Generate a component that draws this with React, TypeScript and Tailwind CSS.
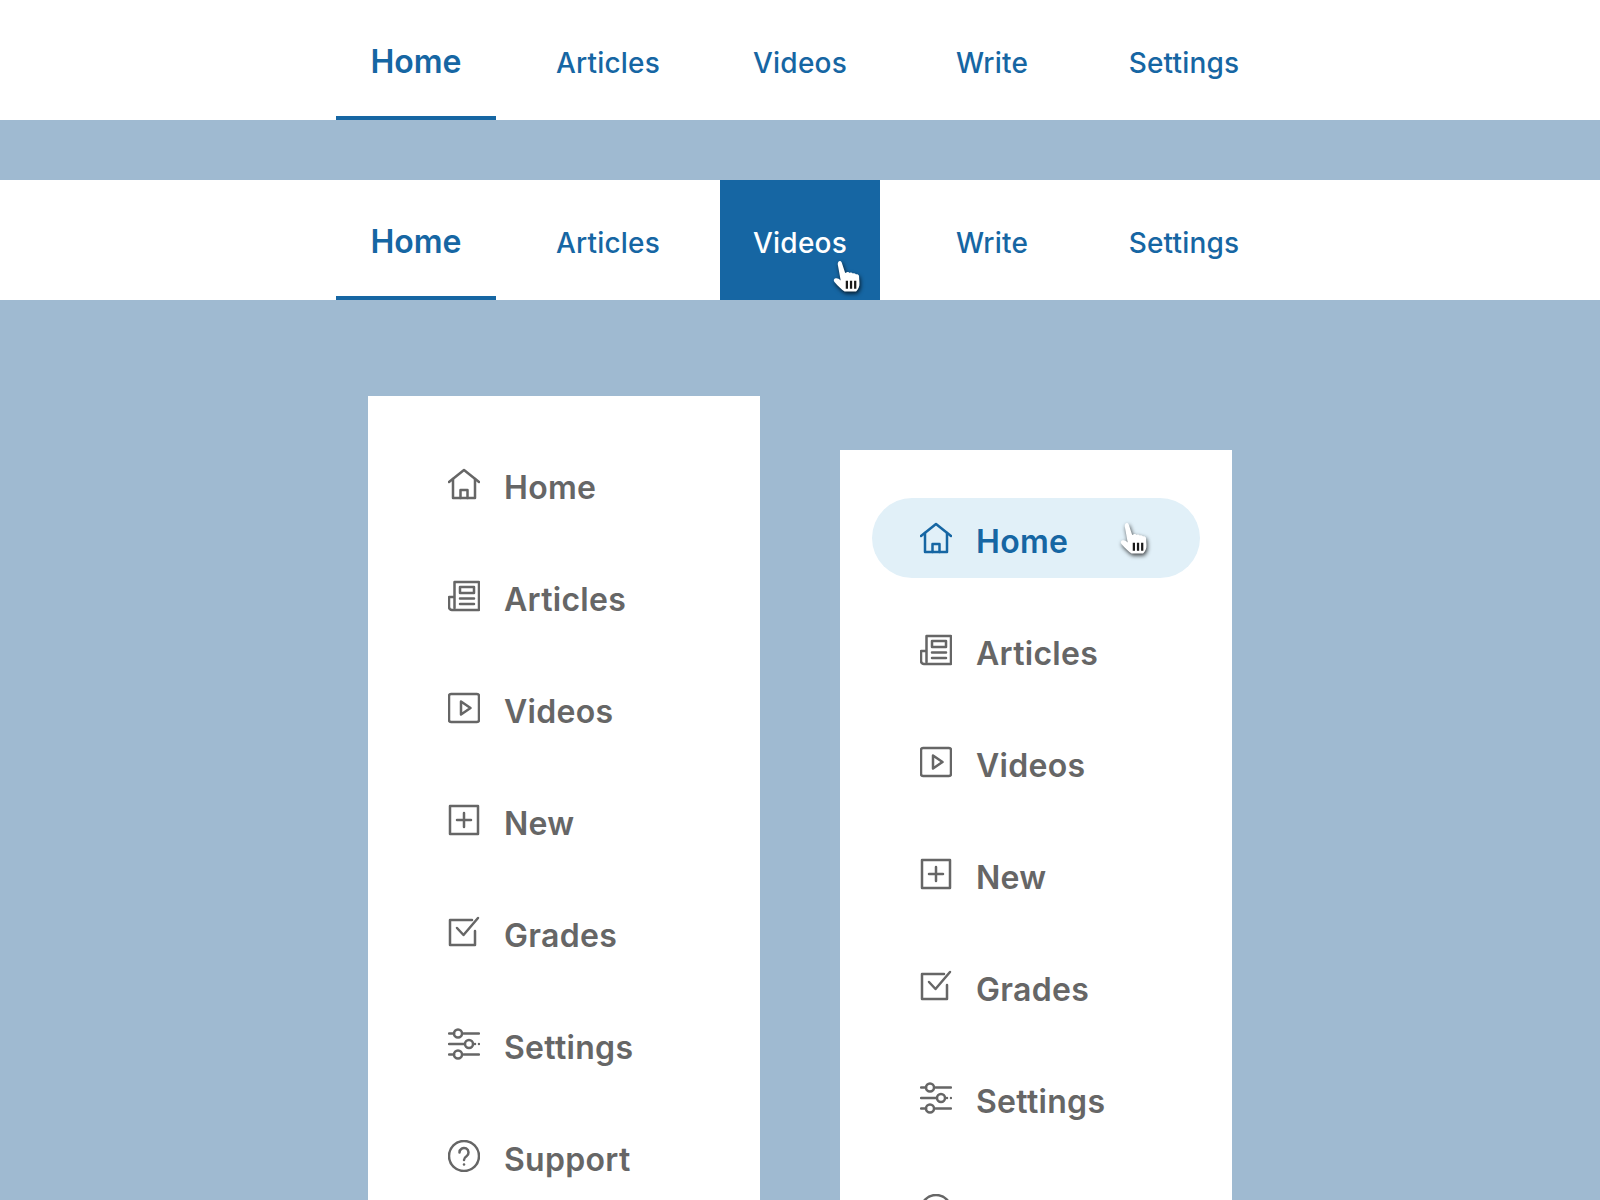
import React from "react";

const tabs = ["Home", "Articles", "Videos", "Write", "Settings"];

type IconProps = { className?: string };

const Svg: React.FC<React.PropsWithChildren<IconProps>> = ({ className, children }) => (
  <svg
    viewBox="0 0 32 32"
    fill="none"
    stroke="currentColor"
    strokeWidth="2.500"
    strokeLinecap="round"
    strokeLinejoin="round"
    className={`w-8 h-8 shrink-0 ${className ?? ""}`}
  >
    {children}
  </svg>
);

const HomeIcon = () => (
  <Svg>
    <path d="M1 14 16 2l15 12" />
    <path d="M5 11v19h22V11" />
    <path d="M12.500 30v-8h7v8" />
  </Svg>
);

const ArticlesIcon = () => (
  <Svg>
    <path d="M6.500 28V2H31v28H4a3 3 0 0 1-3-3V17h5.500" />
    <rect x="12" y="7" width="14" height="6" />
    <path d="M12 18.500h14M12 24h14" />
  </Svg>
);

const VideosIcon = () => (
  <Svg>
    <rect x="1" y="2" width="30" height="28" rx="2" />
    <path d="M13 9.500 22.500 16 13 22.500z" />
  </Svg>
);

const NewIcon = () => (
  <Svg>
    <rect x="2" y="2" width="28" height="28" />
    <path d="M16 9v14M9 16h14" />
  </Svg>
);

const GradesIcon = () => (
  <Svg>
    <path d="M24 4H2v25h25V15" />
    <path d="M9 12l6.500 7L30 2" />
  </Svg>
);

const SettingsIcon = () => (
  <Svg>
    <circle cx="10" cy="5.500" r="4" />
    <circle cx="21" cy="16" r="4" />
    <circle cx="10" cy="26.500" r="4" />
    <path d="M1 5.500h5M15.500 5.500H31M1 16h15.500M27 16h0M31 16h0M1 26.500h5M15.500 26.500H31" />
  </Svg>
);

const SupportIcon = () => (
  <Svg>
    <circle cx="16" cy="16" r="15" />
    <path d="M11.500 12.500a4.500 4.500 0 1 1 7 3.700c-1.700 1.100-2.500 2-2.500 3.800" />
    <path d="M16 24.500h0" />
  </Svg>
);

const items = [
  { label: "Home", Icon: HomeIcon },
  { label: "Articles", Icon: ArticlesIcon },
  { label: "Videos", Icon: VideosIcon },
  { label: "New", Icon: NewIcon },
  { label: "Grades", Icon: GradesIcon },
  { label: "Settings", Icon: SettingsIcon },
  { label: "Support", Icon: SupportIcon },
];

// pointer cursor, white hand with a soft shadow
const Hand: React.FC<IconProps> = ({ className }) => (
  <svg
    viewBox="0 0 28 32"
    className={`absolute w-[32px] h-[36px] drop-shadow-[1px_2px_2px_rgba(0,0,0,0.75)] ${className ?? ""}`}
  >
    <path
      d="M5.500 1.500c1-1 2.500-.5 3 1l3 9 1.500-.7c1-.4 2-.1 2.500.7 1-.6 2.200-.4 2.800.5 1-.5 2.200-.2 2.700.7 1.200-.3 2.600.2 2.800 1.500l.4 6.300c.2 3-1 5.500-3 7.500H11c-2.500-1.500-5.500-4.500-9-8.500-1.200-1.400-.6-3 1-3.300 1.500-.3 3 .5 4.500 2L5 4.500c-.3-1 0-2.400.5-3z"
      fill="#fff"
    />
    <path d="M13 18.500v7M16.700 18.500v7M20.400 18.500v7" stroke="#1a1a1a" strokeWidth="2" fill="none" />
  </svg>
);

const TopNav: React.FC<{ hovered?: boolean }> = ({ hovered }) => (
  <nav className="h-[120px] bg-white flex justify-center gap-8">
    {tabs.map((tab, idx) => (
      <a
        key={tab}
        className={`relative w-40 h-[120px] flex items-center justify-center ${
          idx === 0
            ? "border-b-4 border-[#1666a3] text-[32px] font-semibold text-[#1666a3] pt-2"
            : "text-[28px] font-medium tracking-[0.2px] pt-1.5"
        } ${idx !== 0 && !(hovered && tab === "Videos") ? "text-[#1666a3]" : ""} ${
          hovered && tab === "Videos" ? "bg-[#1666a3] text-white" : ""
        }`}
      >
        {tab}
        {hovered && tab === "Videos" && <Hand className="left-[112px] top-[80px]" />}
      </a>
    ))}
  </nav>
);

const SideMenu: React.FC<{ active?: boolean; className?: string }> = ({ active, className }) => (
  <aside className={`w-[392px] bg-white px-8 pt-12 pb-12 flex flex-col gap-8 shrink-0 ${className ?? ""}`}>
    {items.map(({ label, Icon }, idx) => (
      <a
        key={label}
        className={`relative h-20 shrink-0 rounded-[40px] pl-12 flex items-center gap-6 text-[32px] font-semibold tracking-[0.3px] ${
          active && idx === 0 ? "bg-[#e1f0f8] text-[#1666a3]" : "text-[#666666]"
        }`}
      >
        <Icon />
        <span className="mt-2">{label}</span>
        {active && idx === 0 && <Hand className="left-[247px] top-[24px]" />}
      </a>
    ))}
  </aside>
);

export default function App() {
  return (
    <div className="h-[1200px] overflow-hidden bg-[#9fbad1] font-['Inter',sans-serif]">
      <TopNav />
      <div className="h-[60px]" />
      <TopNav hovered />
      <div className="flex justify-center gap-20 mt-24">
        <SideMenu />
        <SideMenu active className="mt-[54px]" />
      </div>
    </div>
  );
}
